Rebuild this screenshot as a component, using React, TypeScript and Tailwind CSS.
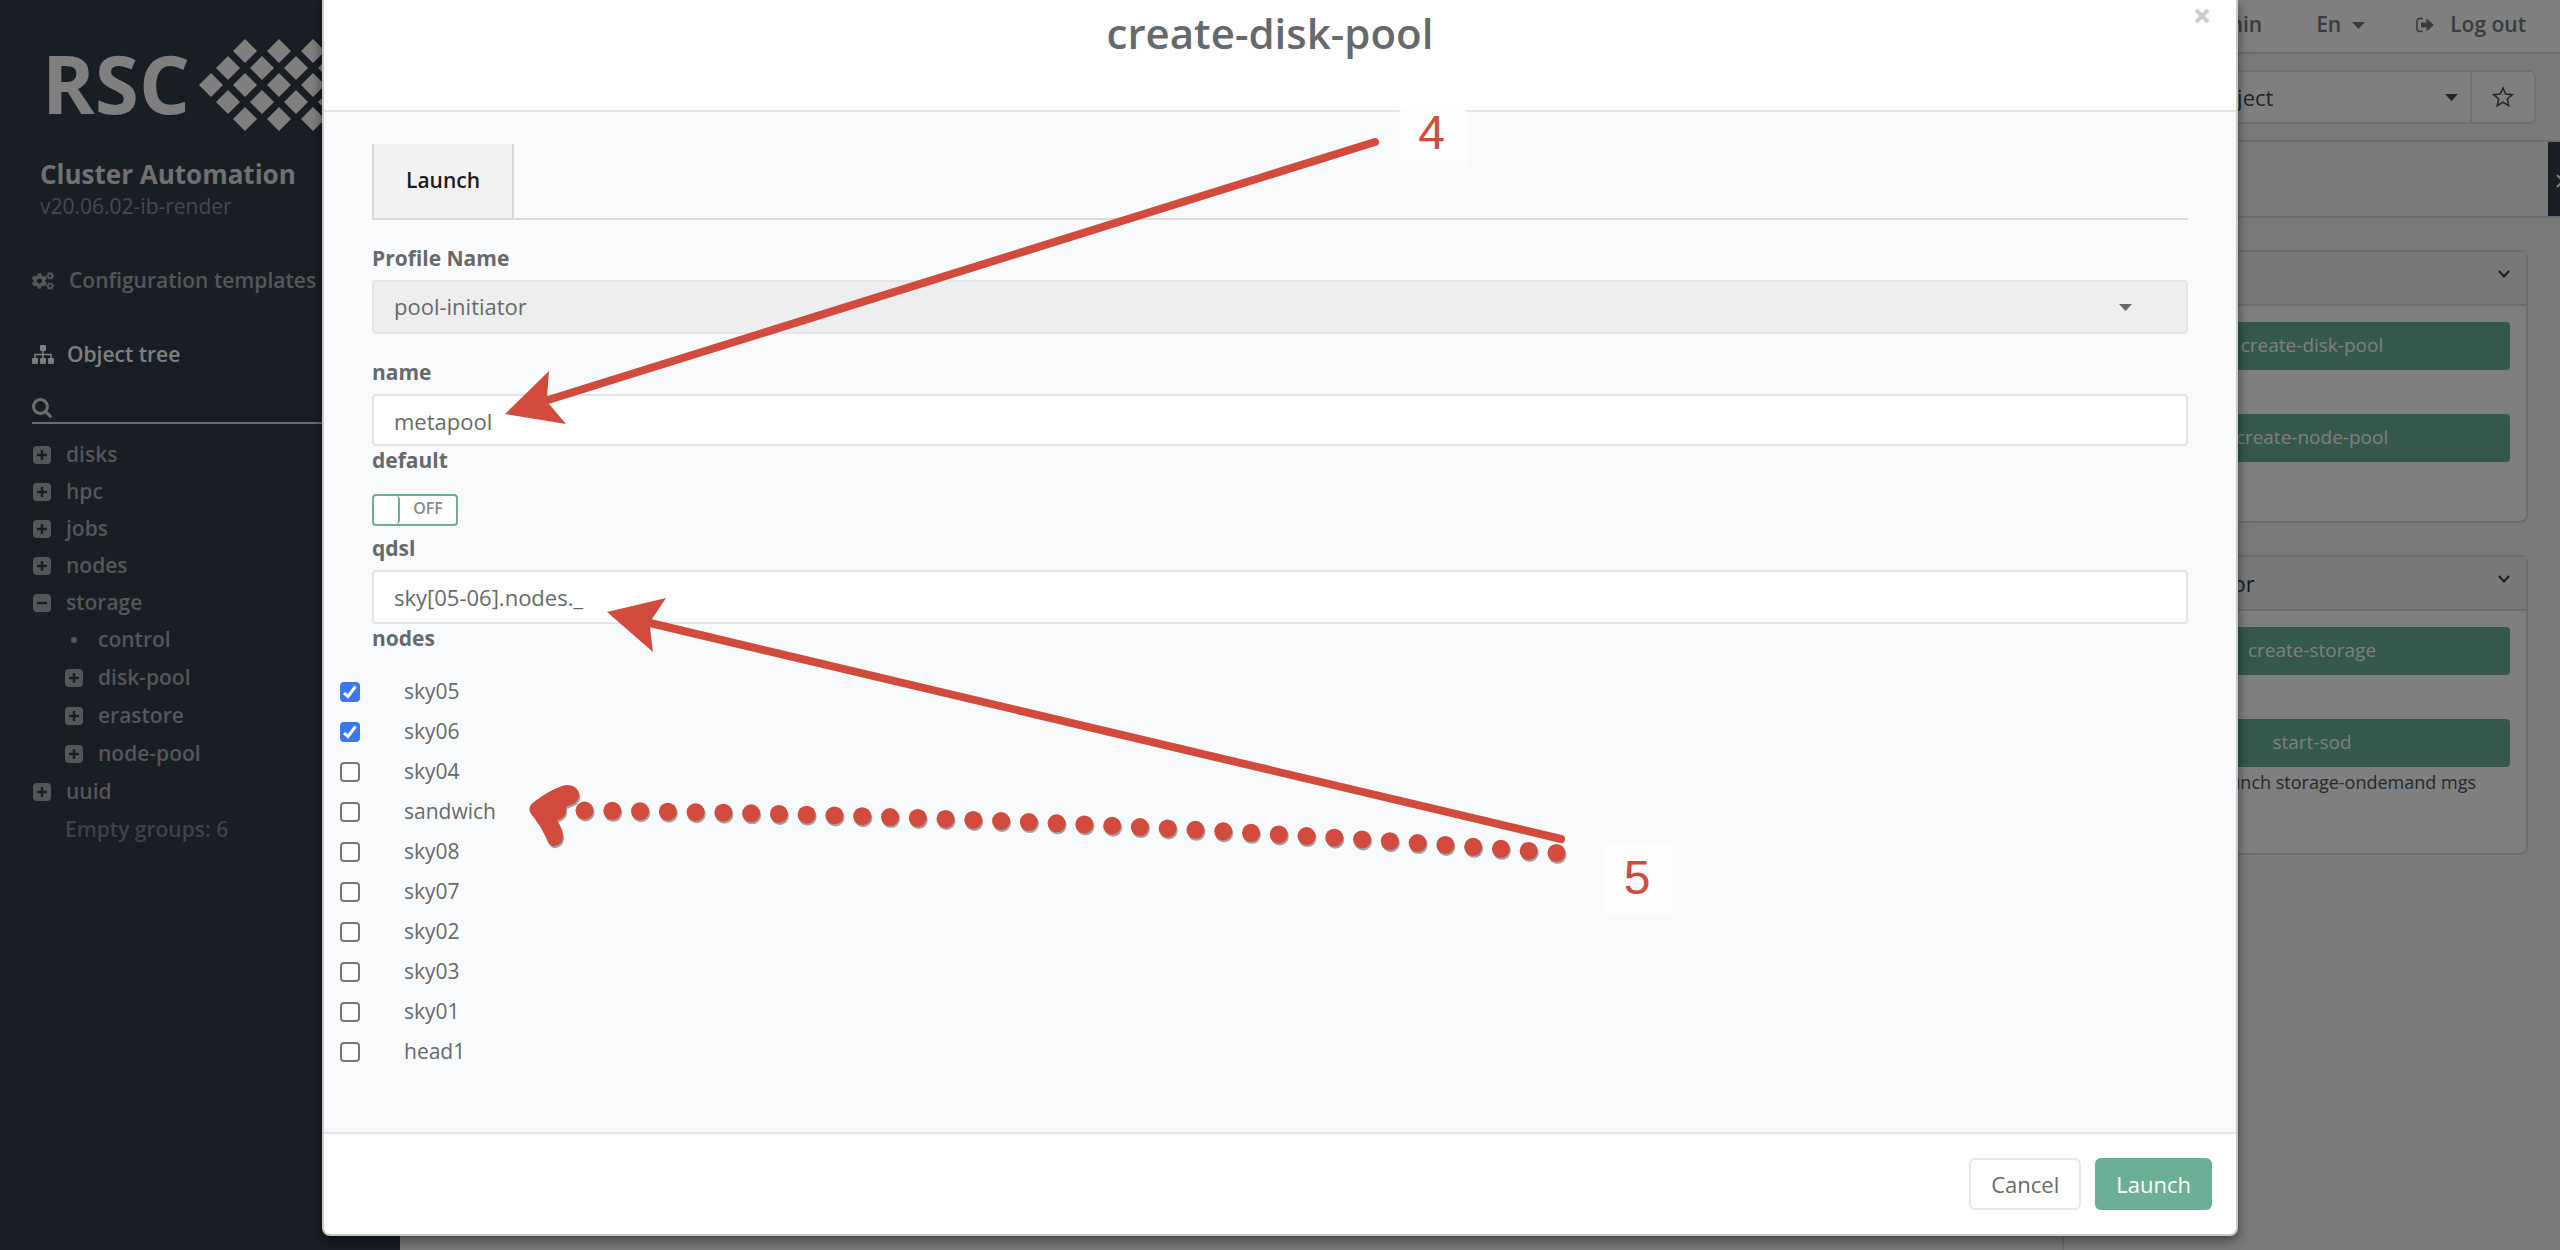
import React from "react";
import { FaCogs } from "react-icons/fa";

const tree = [
  { label: "disks", open: false },
  { label: "hpc", open: false },
  { label: "jobs", open: false },
  { label: "nodes", open: false },
  { label: "storage", open: true, children: ["control", "disk-pool", "erastore", "node-pool"] },
  { label: "uuid", open: false },
];

const nodes = ["sky05", "sky06", "sky04", "sandwich", "sky08", "sky07", "sky02", "sky03", "sky01", "head1"];

function Logo() {
  const rows = [
    { y: 35, xs: [46, 80, 114, 148] },
    { y: 52, xs: [29, 63, 97, 131, 165] },
    { y: 69, xs: [12, 46, 80, 114, 148] },
    { y: 86, xs: [29, 63, 97, 131, 165] },
    { y: 103, xs: [46, 80, 114, 148] },
  ];
  return (
    <svg width="180" height="138" viewBox="0 0 180 138" fill="#ffffff" aria-hidden="true">
      {rows.map((r) =>
        r.xs.map((x) => (
          <path key={`${r.y}-${x}`} d={`M${x} ${r.y - 12}l12 12l-12 12l-12 -12z`} />
        ))
      )}
    </svg>
  );
}

function BoxIcon({ minus = false }: { minus?: boolean }) {
  return (
    <svg width="18" height="18" viewBox="0 0 18 18" className="shrink-0" aria-hidden="true">
      <rect width="18" height="18" rx="4" fill="currentColor" />
      <path d={minus ? "M4 9H14" : "M4 9H14M9 4V14"} stroke="#323a48" strokeWidth="2.4" />
    </svg>
  );
}

function SitemapIcon() {
  return (
    <svg width="22" height="20" viewBox="0 0 22 20" fill="currentColor" aria-hidden="true">
      <rect x="8" y="0" width="6" height="6" rx="1" />
      <rect x="0" y="13" width="6" height="6" rx="1" />
      <rect x="8" y="13" width="6" height="6" rx="1" />
      <rect x="16" y="13" width="6" height="6" rx="1" />
      <path d="M11 6V13M3 13V9.5H19V13" fill="none" stroke="currentColor" strokeWidth="1.5" />
    </svg>
  );
}

function SearchIcon() {
  return (
    <svg width="20" height="20" viewBox="64 128 1664 1664" fill="currentColor" className="shrink-0" aria-hidden="true">
      <path d="M1216 832q0-185-131.500-316.500t-316.500-131.500-316.500 131.500-131.500 316.500 131.500 316.500 316.500 131.500 316.500-131.500 131.500-316.500zm512 832q0 52-38 90t-90 38q-54 0-90-38l-343-342q-179 124-399 124-143 0-273.500-55.500t-225-150-150-225-55.500-273.500 55.500-273.500 150-225 225-150 273.500-55.500 273.500 55.500 225 150 150 225 55.500 273.500q0 220-124 399l343 343q37 37 37 90z" />
    </svg>
  );
}

function SignOutIcon() {
  return (
    <svg width="18" height="16" viewBox="0 0 18 16" aria-hidden="true">
      <path d="M7 1.500H4Q1 1.500 1 4.500V11.500Q1 14.500 4 14.500H7" fill="none" stroke="currentColor" strokeWidth="1.600" />
      <path d="M5 5.500H10.500V1.500L18 8L10.500 14.500V10.500H5Z" fill="currentColor" />
    </svg>
  );
}

function StarIcon() {
  return (
    <svg width="22" height="22" viewBox="0 0 22 22" fill="none" stroke="currentColor" strokeWidth="1.600" aria-hidden="true">
      <path d="M11 2L13.700 8L20.200 8.700L15.300 13L16.700 19.600L11 16.200L5.300 19.600L6.700 13L1.800 8.700L8.300 8Z" />
    </svg>
  );
}

function Caret({ className = "" }: { className?: string }) {
  return (
    <svg width="13" height="7" viewBox="0 0 13 7" fill="currentColor" className={className} aria-hidden="true">
      <path d="M0 0H13L6.500 7Z" />
    </svg>
  );
}

function Chevron() {
  return (
    <svg width="12" height="8" viewBox="0 0 12 8" fill="none" stroke="currentColor" strokeWidth="2" className="mb-2" aria-hidden="true">
      <path d="M1 1L6 6.500L11 1" />
    </svg>
  );
}

function Sidebar() {
  return (
    <aside className="w-[400px] shrink-0 bg-[#323a48] pl-8 text-[21px] font-semibold text-[#a8acb0]">
      <div className="flex h-[154px] items-start pt-4">
        <span className="w-[167px] shrink-0 pl-[10px] text-[80px] leading-[134px] font-bold text-white">RSC</span>
        <Logo />
      </div>
      <div className="pl-2">
        <div className="text-[26px] leading-10 font-bold text-[#e0e0e0]">Cluster Automation</div>
        <div className="leading-6 font-normal text-[#8c949a]">v20.06.02-ib-render</div>
      </div>
      <nav>
        <a href="#templates" className="mt-11 flex h-[38px] items-center gap-[15px]">
          <FaCogs size={22} aria-hidden="true" />
          Configuration templates
        </a>
        <a href="#tree" className="mt-9 flex h-[38px] items-center gap-[13px] text-white">
          <SitemapIcon />
          Object tree
        </a>
      </nav>
      <div className="mt-5 mr-8 flex h-[30px] items-start gap-2 border-b-2 border-[#d8d8d8] pt-1 text-[#d8d8d8]">
        <SearchIcon />
        <input type="text" aria-label="Search" className="h-5 w-full bg-transparent outline-none" />
      </div>
      <ul className="mt-3">
        {tree.map((item) => (
          <li key={item.label}>
            <button type="button" className="flex h-[37px] items-center gap-[15px] pl-px">
              <BoxIcon minus={item.open} />
              {item.label}
            </button>
            {item.children && (
              <ul className="pl-[33px]">
                {item.children.map((c) => (
                  <li key={c}>
                    <button type="button" className="flex h-[38px] items-center gap-[15px]">
                      {c === "control" ? (
                        <span className="mx-[6px] size-[6px] rounded-full bg-current" />
                      ) : (
                        <BoxIcon />
                      )}
                      {c}
                    </button>
                  </li>
                ))}
              </ul>
            )}
          </li>
        ))}
      </ul>
      <div className="pl-[33px] leading-[38px] text-[#80848a]">Empty groups: 6</div>
    </aside>
  );
}

function Card({ title, children, tail }: { title: string; children: React.ReactNode; tail: string }) {
  return (
    <section className="mt-8 rounded-lg border-2 border-[#dadada] bg-white">
      <h2 className="flex h-[54px] items-center justify-between border-b-2 border-[#dadada] bg-[#f2f2f2] pr-4 pl-6 text-[#303a4a]">
        {title}
        <Chevron />
      </h2>
      <div className={tail}>{children}</div>
    </section>
  );
}

function Action({ children }: { children: React.ReactNode }) {
  return (
    <button type="button" className="block h-12 w-full rounded bg-[#6cae96] pb-[2px] text-[19px] text-white">
      {children}
    </button>
  );
}

function Background() {
  return (
    <div className="flex min-h-[1250px] w-full text-[22px] text-[#4a5258]">
      <Sidebar />
      <main className="flex min-w-0 grow flex-col bg-[#f4f4f4]">
        <header className="flex h-[54px] items-center justify-end border-b-2 border-[#dadada] bg-white pr-[34px] pb-[2px] text-[21px] font-semibold text-[#70787e]">
          <span>admin</span>
          <button type="button" className="ml-[54px] flex items-center gap-[11px]">
            En <Caret />
          </button>
          <a href="#logout" className="ml-[51px] flex items-center gap-4">
            <SignOutIcon /> Log out
          </a>
        </header>
        <div className="flex h-[88px] items-center justify-end border-b-2 border-[#dadada] pr-6">
          <button type="button" className="flex h-[54px] w-[420px] items-center justify-between border-2 border-[#e2e2e2] bg-white pr-3 pl-[90px] text-[#404a54]">
            Select object <Caret />
          </button>
          <button type="button" aria-label="Favourite" className="flex h-[54px] w-16 items-center justify-center rounded-r-md border-2 border-l-0 border-[#e2e2e2] bg-white">
            <StarIcon />
          </button>
        </div>
        <div className="flex h-[76px] justify-end border-b-2 border-[#dadada] bg-[#f6f6f6]">
          <button type="button" aria-label="Expand" className="w-3 overflow-hidden bg-[#323a48] pt-1 pl-2 text-white">
            <svg width="8" height="14" viewBox="0 0 8 14" fill="none" stroke="currentColor" strokeWidth="2" aria-hidden="true">
              <path d="M1 1L7 7L1 13" />
            </svg>
          </button>
        </div>
        <div className="flex grow">
          <div className="grow" />
          <div className="w-[498px] shrink-0 border-l-2 border-[#dadada] pr-8 pl-8">
            <Card title="pool" tail="flex flex-col gap-11 px-4 pt-4 pb-[59px]">
              <Action>create-disk-pool</Action>
              <Action>create-node-pool</Action>
            </Card>
            <Card title="pool-initiator" tail="px-4 pt-4 pb-14">
              <Action>create-storage</Action>
              <div className="h-11" />
              <Action>start-sod</Action>
              <p className="pr-[34px] text-right text-[18px] leading-[30px]">Launch storage-ondemand mgs</p>
            </Card>
          </div>
        </div>
      </main>
    </div>
  );
}

const labelClass = "block text-[21px] leading-[28px] font-bold";
const inputClass = "block w-full rounded-sm border-2 border-[#e4e5e5] bg-white px-5 text-[22px] outline-none";

function Modal() {
  return (
    <div
      role="dialog"
      aria-label="create-disk-pool"
      className="mx-[322px] rounded-b-lg border-2 border-t-0 border-[#c9c7c7] bg-white text-[22px] text-[#676a6c] shadow-[0_4px_12px_rgba(0,0,0,0.5)]"
    >
      <header className="relative h-28 border-b-2 border-[#e4e5e5] pr-5 text-center">
        <h1 className="text-[42px] leading-[66px] font-semibold">create-disk-pool</h1>
        <button type="button" aria-label="Close" className="absolute top-2 right-[26px] text-[#d0cccc]">
          <svg width="16" height="16" viewBox="0 0 16 16" stroke="currentColor" strokeWidth="4" aria-hidden="true">
            <path d="M2 2L14 14M14 2L2 14" />
          </svg>
        </button>
      </header>
      <div className="bg-[#f9fafc] px-12 pt-8">
        <div className="border-b-2 border-[#d8d9d9]">
          <button type="button" className="block h-[74px] border-x-2 border-[#d8d9d9] bg-[#f2f2f2] px-8 text-[21px] font-semibold text-[#191d25]">
            Launch
          </button>
        </div>
        <label htmlFor="profile" className={`${labelClass} mt-6 mb-2`}>Profile Name</label>
        <div className="relative">
          <select id="profile" disabled className="block h-[54px] w-full appearance-none rounded-sm border-2 border-[#e4e5e5] bg-[#eeeeee] px-5 pb-[2px] text-[22px] opacity-100">
            <option>pool-initiator</option>
          </select>
          <Caret className="absolute top-6 right-14" />
        </div>
        <label htmlFor="name" className={`${labelClass} mt-6 mb-2`}>name</label>
        <input id="name" type="text" defaultValue="metapool" className={`${inputClass} h-[52px] pt-[2px]`} />
        <span className={labelClass}>default</span>
        <button type="button" role="switch" aria-checked="false" aria-label="default" className="mt-5 flex h-8 w-[86px] overflow-hidden rounded border-2 border-[#6cae96] bg-white">
          <span className="h-full w-[26px] rounded-sm border-r-2 border-[#6cae96]" />
          <span className="grow text-center text-[16px] leading-6 font-semibold text-[#888a8c]">OFF</span>
        </button>
        <label htmlFor="qdsl" className={`${labelClass} mt-2 mb-2`}>qdsl</label>
        <input id="qdsl" type="text" defaultValue="sky[05-06].nodes._" className={`${inputClass} h-[54px]`} />
        <span className={labelClass}>nodes</span>
        <ul className="-ml-8 pt-5 pb-[60px]">
          {nodes.map((n, i) => (
            <li key={n} className="h-10">
              <label className="flex h-10 items-center gap-11 text-[21px]">
                <input
                  type="checkbox"
                  defaultChecked={i < 2}
                  className="peer sr-only"
                />
                <span className="flex size-5 items-center justify-center rounded border-2 border-[#767676] bg-white text-white peer-checked:border-[#3b78ee] peer-checked:bg-[#3b78ee]">
                  <svg width="14" height="14" viewBox="0 0 14 14" fill="none" stroke="currentColor" strokeWidth="3" aria-hidden="true">
                    <path d="M1 8L5 11.500L12.500 1.500" />
                  </svg>
                </span>
                <span className="pb-[2px] leading-8">{n}</span>
              </label>
            </li>
          ))}
        </ul>
      </div>
      <footer className="flex justify-end gap-[14px] border-t-2 border-[#e4e5e5] py-6 pr-6">
        <button type="button" className="h-[52px] rounded-md border-2 border-[#e7e7e7] bg-white px-5">Cancel</button>
        <button type="button" className="h-[52px] rounded-md bg-[#6cae96] px-[21px] text-white">Launch</button>
      </footer>
    </div>
  );
}

function Annotations() {
  const dots = Array.from({ length: 36 }, (_, t) => ({
    x: 584.5 + t * 27.77,
    y: 810.5 + t * 0.314 + t * t * 0.0257,
  }));
  return (
    <div className="pointer-events-none absolute top-0 left-0 font-['Liberation_Sans',Arial,sans-serif] text-[48px] text-[#d24b3c]">
      <svg width="1700" height="900" viewBox="0 0 1700 900" fill="currentColor" aria-hidden="true">
        <path d="M548 400L1375 142M650 623L1561 839" fill="none" stroke="currentColor" strokeWidth="8" strokeLinecap="round" />
        <path d="M505 414L549 371L547 397L549 404L566 424Z" />
        <path d="M607 612L666 598L652 619L650 627L653 652Z" />
        <g className="[filter:drop-shadow(1px_2px_0_rgba(0,0,0,0.35))]">
          {dots.map((d) => (
            <circle key={d.x} cx={d.x} cy={d.y} r="9" />
          ))}
          <path d="M530 812Q528 806 534 802Q548 791 562 786Q570 783 576 788Q583 796 575 803L566 807Q567 815 562 818Q560 820 557 820Q563 830 563 837Q562 845 555 846Q551 847 548 842Q542 827 530 812Z" />
        </g>
      </svg>
      <span className="absolute top-[110px] left-[1399px] flex h-[57px] w-[68px] items-start justify-center rounded-sm bg-[#fdfdfd] pr-[3px] leading-[46px]">4</span>
      <span className="absolute top-[845px] left-[1605px] flex h-[69px] w-[67px] items-start justify-center rounded-sm bg-[#fdfdfd] pr-[3px] leading-[66px]">5</span>
    </div>
  );
}

export default function App() {
  return (
    <div className="relative overflow-hidden font-['Open_Sans',sans-serif]">
      <Background />
      <div className="absolute inset-0 bg-black/50">
        <Modal />
      </div>
      <Annotations />
    </div>
  );
}
